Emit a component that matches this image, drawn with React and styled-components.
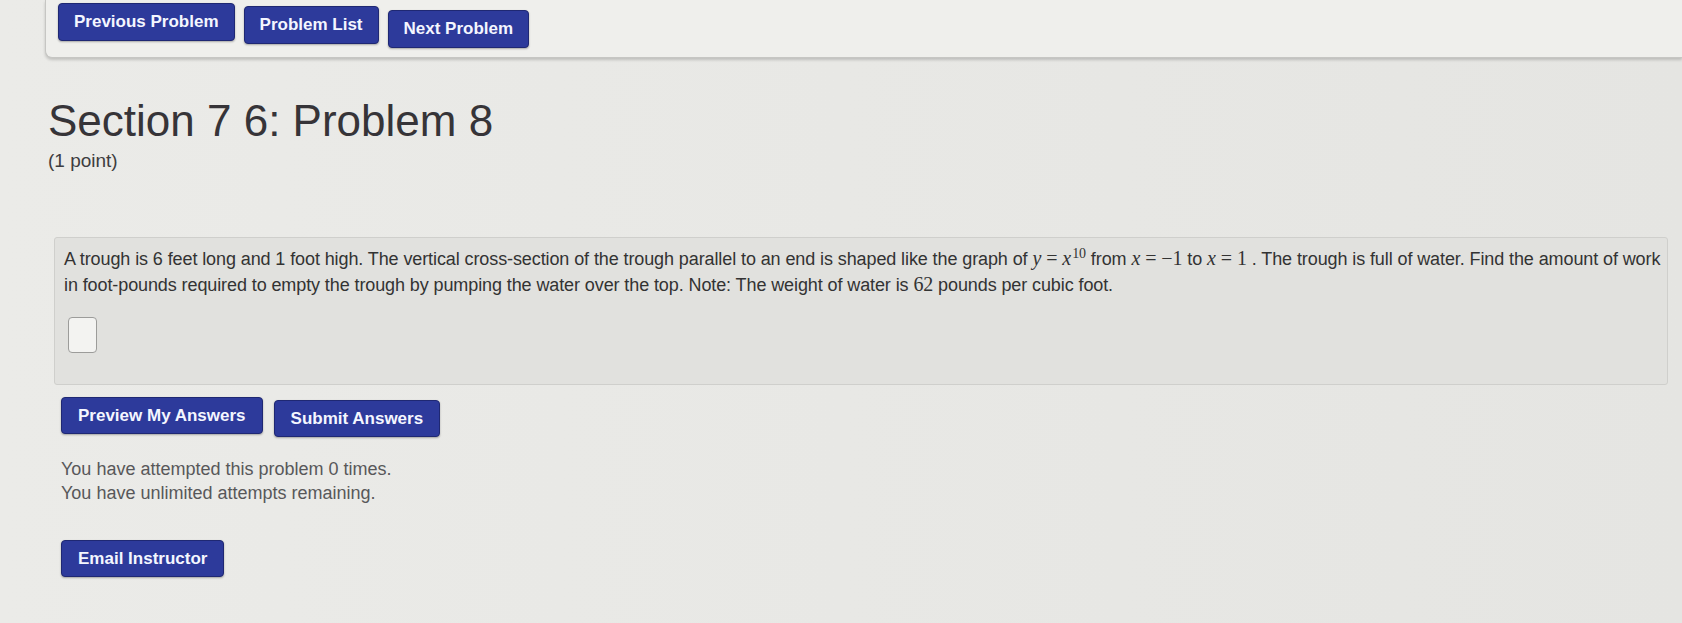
import styled, { createGlobalStyle } from "styled-components"

const GlobalStyle = createGlobalStyle`
    html, body {
        margin: 0;
        padding: 0;
    }
    body {
        background: linear-gradient(90deg, #ebebe8 0%, #e8e8e5 50%, #e5e5e2 100%);
        font-family: "Liberation Sans", Arial, sans-serif;
        overflow: hidden;
        height: 623px;
    }
`

export default function App() {
    return (
        <>
            <GlobalStyle />
            <Page>
                <NavPanel>
                    <NavButton $top={0}>Previous Problem</NavButton>
                    <NavButton $top={3}>Problem List</NavButton>
                    <NavButton $top={7}>Next Problem</NavButton>
                </NavPanel>

                <Title>Section 7 6: Problem 8</Title>
                <Points>(1 point)</Points>

                <ProblemBox>
                    <Line>
                        A trough is 6 feet long and 1 foot high. The vertical cross-section of the trough parallel to an end is shaped like the graph of{" "}
                        <MathI>y</MathI><MathO>=</MathO><MathI>x</MathI><Sup>10</Sup>{" "}from{" "}
                        <MathI>x</MathI><MathO>=</MathO><MathN>&minus;1</MathN> to{" "}
                        <MathI>x</MathI><MathO>=</MathO><MathN>1</MathN> . The trough is full of water. Find the amount of work
                    </Line>
                    <Line>
                        in foot-pounds required to empty the trough by pumping the water over the top. Note: The weight of water is <MathN>62</MathN> pounds per cubic foot.
                    </Line>
                    <AnswerInput />
                </ProblemBox>

                <Actions>
                    <ActionButton>Preview My Answers</ActionButton>
                    <ActionButton $top={3}>Submit Answers</ActionButton>
                </Actions>

                <Attempts>
                    <p>You have attempted this problem 0 times.</p>
                    <p>You have unlimited attempts remaining.</p>
                </Attempts>

                <ActionButton $single>Email Instructor</ActionButton>
            </Page>
        </>
    )
}

const Page = styled.div`
    display: flex;
    flex-direction: column;
    align-items: flex-start;
    width: 1682px;
`

const NavPanel = styled.div`
    align-self: stretch;
    display: flex;
    align-items: flex-start;
    gap: 9px;
    height: 58px;
    box-sizing: border-box;
    margin-left: 45px;
    padding: 3px 0 0 12px;
    background: #efefec;
    border: 1px solid #c6c6c3;
    border-top: none;
    border-right: none;
    border-radius: 0 0 0 7px;
    box-shadow: 0 2px 3px rgba(0, 0, 0, 0.18);
`

const NavButton = styled.div`
    margin-top: ${p => p.$top || 0}px;
    height: 38px;
    box-sizing: border-box;
    display: flex;
    align-items: center;
    padding: 0 15px;
    background: #2d3a9b;
    border: 1px solid #1f2873;
    border-radius: 4px;
    color: #f4f6ff;
    font-size: 17px;
    font-weight: 700;
    box-shadow: 0 1px 2px rgba(0, 0, 0, 0.3);
`

const Title = styled.h1`
    margin: 36px 0 0 48px;
    font-size: 44px;
    line-height: 53px;
    font-weight: 400;
    color: #363438;
`

const Points = styled.div`
    margin: 3px 0 0 48px;
    font-size: 19px;
    line-height: 22px;
    color: #3e3d40;
`

const ProblemBox = styled.div`
    align-self: stretch;
    margin: 65px 14px 0 54px;
    padding: 8px 9px 31px;
    background: #e1e1de;
    border: 1px solid #cfcfcc;
    border-radius: 3px;
    color: #333;
    font-size: 18px;
    line-height: 25px;
    letter-spacing: -0.1px;
`

const Line = styled.div`
    white-space: nowrap;
`

const MathI = styled.i`
    font-family: "Liberation Serif", "DejaVu Serif", serif;
    font-size: 20px;
`

const MathN = styled.span`
    font-family: "Liberation Serif", "DejaVu Serif", serif;
    font-size: 20px;
`

const MathO = styled.span`
    font-family: "Liberation Serif", "DejaVu Serif", serif;
    font-size: 20px;
    margin: 0 5px;
`

const Sup = styled.sup`
    font-family: "Liberation Serif", "DejaVu Serif", serif;
    font-size: 14px;
    line-height: 0;
    margin-left: 1px;
`

const AnswerInput = styled.div`
    width: 29px;
    height: 36px;
    box-sizing: border-box;
    margin: 19px 0 0 4px;
    background: #f3f3f1;
    border: 1px solid #9c9c9a;
    border-radius: 4px;
`

const Actions = styled.div`
    display: flex;
    align-items: flex-start;
    gap: 11px;
    margin: 12px 0 0 61px;
`

const ActionButton = styled.div`
    margin-top: ${p => p.$top || 0}px;
    ${p => p.$single && "margin-left: 61px; margin-top: 35px;"}
    height: 37px;
    box-sizing: border-box;
    display: flex;
    align-items: center;
    padding: 0 16px;
    background: #2d3a9b;
    border: 1px solid #1f2873;
    border-radius: 4px;
    color: #f4f6ff;
    font-size: 17px;
    font-weight: 700;
    box-shadow: 0 1px 2px rgba(0, 0, 0, 0.3);
`

const Attempts = styled.div`
    margin: 20px 0 0 61px;
    color: #58585a;
    font-size: 18px;
    line-height: 24px;
    p {
        margin: 0;
    }
`
